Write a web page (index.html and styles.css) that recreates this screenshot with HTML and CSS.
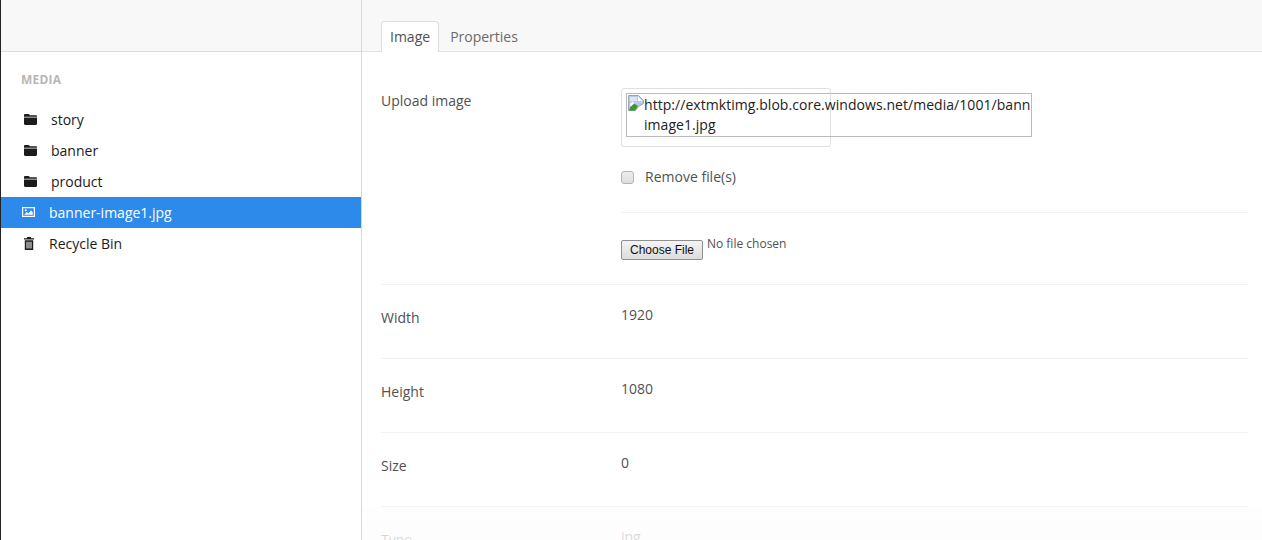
FILE: index.html
```html
<!DOCTYPE html>
<html lang="en">
<head>
<meta charset="utf-8">
<title>Media</title>
<link rel="stylesheet" href="styles.css">
</head>
<body>
<div class="app">
  <aside class="sidebar">
    <div class="sidebar-head"></div>
    <h2 class="tree-title">MEDIA</h2>
    <ul class="tree">
      <li class="tree-item tree-folder">
        <svg class="ico ico-folder" viewBox="0 0 13 11"><path d="M0 1.2C0 .5.5 0 1.2 0h3.2c.5 0 .8.2 1 .6l.3.6h6.1c.7 0 1.2.5 1.2 1.2v.4H0zM0 3.6h13v6.2c0 .7-.5 1.2-1.2 1.2H1.2C.5 11 0 10.500 0 9.800z"/></svg>
        <span>story</span>
      </li>
      <li class="tree-item tree-folder">
        <svg class="ico ico-folder" viewBox="0 0 13 11"><path d="M0 1.2C0 .5.5 0 1.2 0h3.2c.5 0 .8.2 1 .6l.3.6h6.1c.7 0 1.2.5 1.2 1.2v.4H0zM0 3.6h13v6.2c0 .7-.5 1.2-1.2 1.2H1.2C.5 11 0 10.500 0 9.800z"/></svg>
        <span>banner</span>
      </li>
      <li class="tree-item tree-folder">
        <svg class="ico ico-folder" viewBox="0 0 13 11"><path d="M0 1.2C0 .5.5 0 1.2 0h3.2c.5 0 .8.2 1 .6l.3.6h6.1c.7 0 1.2.5 1.2 1.2v.4H0zM0 3.6h13v6.2c0 .7-.5 1.2-1.2 1.2H1.2C.5 11 0 10.500 0 9.800z"/></svg>
        <span>product</span>
      </li>
      <li class="tree-item tree-selected">
        <svg class="ico ico-image" viewBox="0 0 13 10"><path fill-rule="evenodd" d="M0 0h13v10H0zM1.200 1.200v7.600h10.600V1.200zM2.200 7.800l2.600-2.800 1.600 1.500 2.600-3.300 1.800 2.300v2.300zM3.800 2.200a1 1 0 1 1 0 2 1 1 0 0 1 0-2z"/></svg>
        <span>banner-image1.jpg</span>
      </li>
      <li class="tree-item">
        <svg class="ico ico-trash" viewBox="0 0 10 13"><path fill-rule="evenodd" d="M3.300 0h3.400l.6 1.300H10v1.200H0V1.300h2.700zM.8 3.300h8.400V13H.8zM2.500 4.800v6.800h1V4.800zM4.500 4.800v6.800h1V4.800zM6.500 4.800v6.800h1V4.800z"/></svg>
        <span>Recycle Bin</span>
      </li>
    </ul>
  </aside>
  <main class="main">
    <nav class="tabs">
      <a class="tab tab-active">Image</a>
      <a class="tab">Properties</a>
    </nav>
    <div class="form">
      <div class="row row-upload">
        <label class="row-label">Upload image</label>
        <div class="row-value">
          <div class="thumb">
            <div class="broken">
              <svg class="broken-ico" viewBox="0 0 16 16"><path fill="#b9c9e6" stroke="#9aa5b8" d="M.5.500h10l5 5v3l-5 3-3 4h-7z"/><path fill="#fff" d="M10 1.500l4.500 4.500H10z"/><path fill="#dce6f6" d="M2 2h7v4H2z"/><path fill="#3f9a24" d="M1 15.500c.8-3.500 3-6.500 6-6.500l3 2-3 4.500z"/><path fill="#fff" d="M2 9l2.500-2.500L6 8l-3 3.500z"/></svg><span class="broken-line">http://extmktimg.blob.core.windows.net/media/1001/banner-</span>
              <span class="broken-line broken-second">image1.jpg</span>
            </div>
          </div>
          <label class="remove"><input class="check" type="checkbox"><span>Remove file(s)</span></label>
          <div class="file-line">
            <button class="file-btn" type="button">Choose File</button>
            <span class="file-none">No file chosen</span>
          </div>
        </div>
      </div>
      <div class="row"><div class="row-label">Width</div><div class="row-value">1920</div></div>
      <div class="row"><div class="row-label">Height</div><div class="row-value">1080</div></div>
      <div class="row"><div class="row-label">Size</div><div class="row-value">0</div></div>
      <div class="row"><div class="row-label">Type</div><div class="row-value">jpg</div></div>
    </div>
    <div class="fade"></div>
  </main>
</div>
</body>
</html>
```

FILE: styles.css
```css
* { box-sizing: border-box; }
html, body { margin: 0; height: 100%; overflow: hidden; background: #fff; }
body { font-family: "Open Sans", sans-serif; font-size: 14px; line-height: 20px; color: #515151; }
.app { display: flex; height: 540px; border-left: 1px solid #222; }

.sidebar { width: 361px; flex: none; border-right: 1px solid #d9d9d9; }
.sidebar-head { height: 52px; background: #f8f8f8; border-bottom: 1px solid #dcdcdc; }
.tree-title { margin: 0; padding: 18px 0 0 20px; height: 52px; font-size: 12px; font-weight: 700; line-height: 20px; letter-spacing: .2px; color: #bbb6b2; }
.tree { list-style: none; margin: 0; padding: 0; }
.tree-item { display: flex; align-items: center; height: 31px; padding-left: 21px; color: #1b1b1b; }
.tree-selected { background: #2e8aea; color: #fff; }
.ico { flex: none; fill: currentColor; }
.ico-folder { width: 13px; height: 11px; margin: 0 14px 0 2px; }
.ico-image { width: 13px; height: 10px; margin: -2px 14px 0 0; }
.ico-trash { width: 10px; height: 13px; margin: -1px 15px 0 2px; }

.main { flex: 1; min-width: 0; position: relative; }
.tabs { display: flex; height: 52px; padding: 21px 0 0 19px; background: #f8f8f8; border-bottom: 1px solid #e3e3e3; }
.tab { height: 31px; padding: 6px 11px; color: #6b6b6b; }
.tab-active { padding: 5px 8px; background: #fff; color: #515151; border: 1px solid #dedede; border-bottom: 0; border-radius: 4px 4px 0 0; }

.form { padding: 16px 14px 0 19px; }
.row { display: grid; grid-template-columns: 240px 1fr; padding: 23px 0 30px; border-bottom: 1px solid #f3f3f3; }
.row-upload { padding-bottom: 24px; }
.row-value { margin-top: -3px; }

.thumb { width: 210px; height: 59px; padding: 4px; border: 1px solid #e0e0e0; border-radius: 3px; margin-bottom: 20px; }
.broken { width: 406px; height: 44px; padding: 1px; border: 1px solid #bbb; overflow: hidden; color: #222; white-space: nowrap; letter-spacing: .05px; }
.broken-ico { width: 16px; height: 16px; vertical-align: top; }
.broken-line { display: inline; }
.broken-second { display: block; padding-left: 16px; }

.remove { display: flex; align-items: center; height: 20px; }
.check { appearance: none; width: 13px; height: 13px; margin: 0 11px 0 0; border: 1px solid #b4b4b4; border-radius: 3px; background: linear-gradient(#ededed, #dedede); }
.file-line { display: flex; align-items: flex-start; margin-top: 25px; padding-top: 27px; border-top: 1px solid #f3f3f3; }
.file-btn { width: 82px; height: 20px; padding: 0; font-family: "Liberation Sans", Arial, sans-serif; font-size: 12px; line-height: 16px; color: #111; background: linear-gradient(#f4f4f4, #dcdcdc); border: 1px solid #8f8f8f; border-radius: 2px; }
.file-none { margin: -6px 0 0 4px; font-size: 12px; }

.fade { position: absolute; left: 0; right: 0; bottom: 0; height: 33px; background: linear-gradient(rgba(253,253,253,.65), rgba(253,253,253,.8)); }
```
